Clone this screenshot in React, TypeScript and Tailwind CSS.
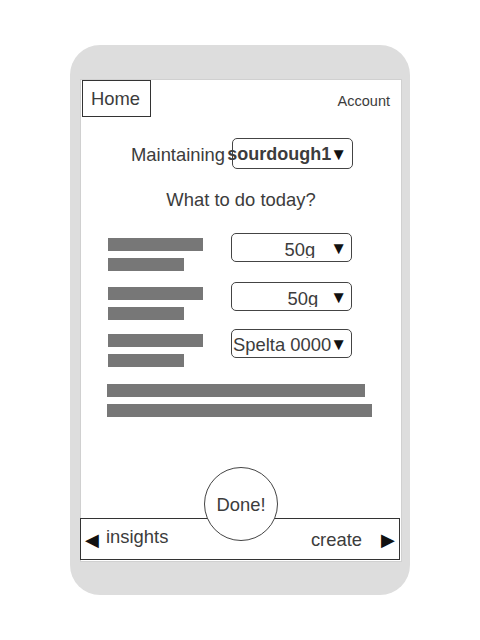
import React from "react";

const font = { fontFamily: '"Liberation Sans", Arial, sans-serif' };

function Bars() {
  return (
    <div className="w-[123px] flex flex-col gap-[7px] pt-[5px] shrink-0">
      <div className="h-[13px] w-[95px] bg-[#777777]" />
      <div className="h-[13px] w-[76px] bg-[#777777]" />
    </div>
  );
}

function Select({ children }: { children: React.ReactNode }) {
  return (
    <div className="w-[121px] h-[29px] border border-[#444] rounded-[5px] flex items-center justify-end whitespace-nowrap text-[18.4px] text-[#3c3c3c] pr-[4px] pt-[2px]">
      {children}
    </div>
  );
}

export default function App() {
  return (
    <div className="w-[480px] h-[640px] bg-white pt-[45px] pl-[70px]" style={font}>
      <div className="w-[340px] h-[550px] rounded-[30px] bg-[#dddddd] pt-[35px] pl-[11px]">
        <div className="relative w-[320px] h-[481px] bg-white flex flex-col shadow-[0_0_0_1px_#d0d0d0]">
          <div className="flex justify-between items-start h-[37px]">
            <div className="ml-[1px] w-[69px] h-[37px] border border-[#333] text-[18.4px] text-[#3c3c3c] pl-[8px] leading-[36px]">
              Home
            </div>
            <div className="text-[14.5px] text-[#3c3c3c] mr-[11px] mt-[11px]">Account</div>
          </div>

          <div className="mt-[21px] flex items-center pl-[50px] h-[31px]">
            <span className="text-[18.4px] text-[#3c3c3c] whitespace-nowrap pt-[2px]">Maintaining</span>
            <div className="ml-[7px] w-[121px] h-[31px] border border-[#444] rounded-[5px] flex items-center justify-end whitespace-nowrap text-[18px] font-bold text-[#3c3c3c] pr-[5px] pt-[2px]">
              <span>sourdough1</span>
              <span className="-ml-[1px] text-[#111] text-[17px]">▼</span>
            </div>
          </div>

          <div className="mt-[20px] text-center text-[18.4px] text-[#3c3c3c] leading-[22px]">What to do today?</div>

          <div className="mt-[22px] flex pl-[27px]">
            <Bars />
            <Select>
              <span className="inline-block h-[19px] overflow-hidden leading-[22px]">50g</span>
              <span className="ml-[15px] text-[#111] text-[17px]">▼</span>
            </Select>
          </div>

          <div className="mt-[11px] flex pl-[27px]">
            <Bars />
            <Select>
              <span className="inline-block h-[19px] overflow-hidden leading-[22px]">50g</span>
              <span className="ml-[12px] text-[#111] text-[17px]">▼</span>
            </Select>
          </div>

          <div className="mt-[9px] flex pl-[27px]">
            <Bars />
            <Select>
              <span>Spelta 0000</span>
              <span className="-ml-[1px] text-[#111] text-[17px]">▼</span>
            </Select>
          </div>

          <div className="mt-[17px] pl-[26px] flex flex-col gap-[7px]">
            <div className="h-[13px] w-[258px] bg-[#777777]" />
            <div className="h-[13px] w-[265px] bg-[#777777]" />
          </div>

          <div className="mt-auto mb-[1px] -ml-[1px] w-[320px] h-[42px] border border-[#333] flex items-center text-[18.4px] text-[#3c3c3c]">
            <span className="ml-[4px] text-[#111] text-[18px] mt-[3px]">◀</span>
            <span className="ml-[7px] -mt-[5px]">insights</span>
            <span className="ml-auto mt-[1px]">create</span>
            <span className="ml-[19px] mr-[4px] text-[#111] text-[18px] mt-[2px]">▶</span>
          </div>

          <div className="absolute left-[123px] top-[387px] w-[74px] h-[74px] rounded-full border border-[#444] bg-white flex items-center justify-center text-[18.4px] text-[#3c3c3c] pt-[1px]">
            Done!
          </div>
        </div>
      </div>
    </div>
  );
}
